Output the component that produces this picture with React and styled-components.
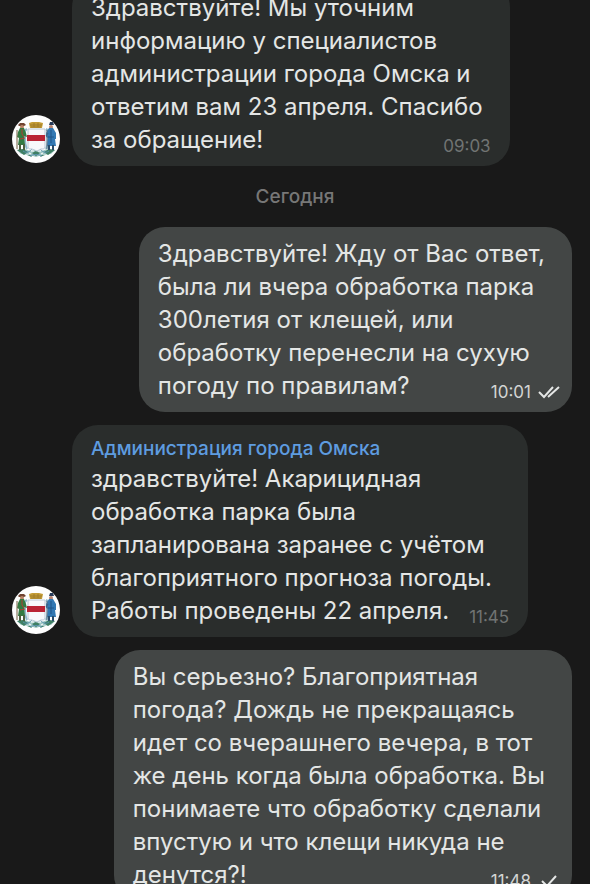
import React, { useLayoutEffect, useRef } from 'react';
import styled, { createGlobalStyle } from 'styled-components';

const messages = [
  {
    id: 1,
    time: '09:03',
    text: `Здравствуйте! Мы уточним
информацию у специалистов
администрации города Омска и
ответим вам 23 апреля. Спасибо
за обращение!`,
  },
  { id: 2, day: 'Сегодня' },
  {
    id: 3,
    own: true,
    read: true,
    time: '10:01',
    text: `Здравствуйте! Жду от Вас ответ,
была ли вчера обработка парка
300летия от клещей, или
обработку перенесли на сухую
погоду по правилам?`,
  },
  {
    id: 4,
    author: 'Администрация города Омска',
    time: '11:45',
    text: `здравствуйте! Акарицидная
обработка парка была
запланирована заранее с учётом
благоприятного прогноза погоды.
Работы проведены 22 апреля.`,
  },
  {
    id: 5,
    own: true,
    time: '11:48',
    text: `Вы серьезно? Благоприятная
погода? Дождь не прекращаясь
идет со вчерашнего вечера, в тот
же день когда была обработка. Вы
понимаете что обработку сделали
впустую и что клещи никуда не
денутся?!`,
  },
];

const Emblem = () => (
  <svg viewBox="0 0 48 48" role="img" aria-label="Администрация города Омска">
    <circle cx="24" cy="24" r="24" fill="#fdfdfd" />
    {/* ribbon and base */}
    <path
      d="M15 14c-4 2-2 5-2 8s0 8 2 12M34 14c4 2 2 5 2 8s0 8-2 12"
      fill="none"
      stroke="#8fb9cb"
      strokeWidth="2"
    />
    <path d="M5 35c5-2 9-1 13 1l6-2 6 2c4-2 8-3 13-1l-4 4-9 1-6 2-6-2-9-1z" fill="#9fc6c4" />
    <path
      d="M5 35l6-1 5 3-4 3zM43 35l-6-1-5 3 4 3zM20 38l4-2 4 2-4 3zM15 40l4 0 1 2zM33 40l-4 0-1 2z"
      fill="#3f7f63"
    />
    <path
      d="M11 36c4 3 7 0 9-2M37 36c-4 3-7 0-9-2M18 41c4-2 8-2 12 0"
      fill="none"
      stroke="#5791ad"
      strokeWidth="1"
    />
    <path d="M19 36l3 0M26 36l3 0M17 38l2 1M31 38l-2 1" stroke="#fff" strokeWidth="1" />
    {/* shield */}
    <path d="M16 14h17v18c0 2-2 2-4 2l-4 2-5-2c-2 0-4 0-4-2z" fill="#f8f8fb" stroke="#b9c8d6" />
    <path d="M15 20h18v6H15z" fill="#ba2334" />
    {/* crown */}
    <path d="M17 8l3-1 4 0 3 0 4 1-1 5H18z" fill="#c39b35" />
    <path d="M18 10h12M19 12h10M22 8v4M26 8v4" stroke="#9d7a2b" strokeWidth="1" />
    {/* left guard */}
    <path d="M6 10l2-2 4 0 2 2-2 1-5 0z" fill="#704331" />
    <circle cx="10" cy="12" r="2" fill="#b98568" />
    <path d="M8 13l4 0 2 5 1 4-3-1 1 9H6l1-7-2-1 1-5z" fill="#347a43" />
    <path d="M10 14v5l2 3M8 24l5-1" fill="none" stroke="#b13d35" strokeWidth="1" />
    <path d="M8 29v6M12 29v6" stroke="#4d6040" strokeWidth="2" />
    <path d="M5 15v19" stroke="#735f41" strokeWidth="1" />
    {/* right guard */}
    <path d="M37 10l1-3 3 0 1 3z" fill="#263a58" />
    <circle cx="39" cy="12" r="2" fill="#b98471" />
    <path d="M37 13l4 0 3 5 0 6-1 0 1 7h-9l1-8-2-1 0-4z" fill="#3278b3" />
    <path d="M39 15v13M36 22l6 0M36 18l-2 3" fill="none" stroke="#205487" strokeWidth="1" />
    <path d="M37 30v5M41 30v5" stroke="#294b6a" strokeWidth="2" />
    <path d="M35 15v19" stroke="#526c80" strokeWidth="1" />
  </svg>
);

const Ticks = ({ read }) => (
  <TickIcon viewBox="0 0 24 14" role="img" aria-label={read ? 'Прочитано' : 'Отправлено'}>
    {read ? <path d="M2 7l5 5 9-10M11 12l11-10" /> : <path d="M5 7l5 5 9-10" />}
  </TickIcon>
);

const Message = ({ author, text, time, own, read }) => (
  <Row $own={own}>
    {!own && (
      <Avatar>
        <Emblem />
      </Avatar>
    )}
    <Bubble $own={own}>
      {author && <Author href="#author">{author}</Author>}
      <Text>
        {text}
        <Meta $own={own}>
          <time>{time}</time>
          {own && <Ticks read={read} />}
        </Meta>
      </Text>
    </Bubble>
  </Row>
);

const App = () => {
  const thread = useRef(null);

  // open the thread just past the top edge of the first bubble
  useLayoutEffect(() => {
    thread.current.scrollTop = 19;
  }, []);

  return (
    <>
      <GlobalStyle />
      <Thread ref={thread}>
        {messages.map(({ id, day, ...message }) =>
          day ? <Day key={id}>{day}</Day> : <Message key={id} {...message} />
        )}
      </Thread>
    </>
  );
};

const GlobalStyle = createGlobalStyle`
  * {
    box-sizing: border-box;
  }

  body {
    margin: 0;
    background: #191919;
    font-family: Inter, Roboto, sans-serif;
  }
`;

const Thread = styled.main`
  display: flex;
  flex-direction: column;
  gap: 13px;
  height: 100vh;
  padding-bottom: 13px;
  overflow-y: auto;
  scrollbar-width: none;
`;

const Row = styled.article`
  display: flex;
  flex-shrink: 0;
  align-items: flex-end;
  justify-content: ${({ $own }) => ($own ? 'flex-end' : 'flex-start')};
  gap: 12px;
  padding: 0 18px 0 12px;
`;

const Avatar = styled.div`
  flex: none;
  width: 48px;
  height: 48px;
  margin-bottom: 3px;

  svg {
    display: block;
  }
`;

const Bubble = styled.div`
  padding: 10px 27px 10px 19px;
  border-radius: 26px;
  background: ${({ $own }) => ($own ? '#434645' : '#2a2d2c')};
`;

const Author = styled.a`
  display: block;
  color: #5e9ce0;
  font-size: 19px;
  font-weight: 500;
  line-height: 27px;
  text-decoration: none;
`;

const Text = styled.p`
  margin: 0;
  color: #e4e6e5;
  font-size: 24px;
  line-height: 33px;
  white-space: pre-line;
`;

/* shares the last line of the text, hanging into the bubble's padding */
const Meta = styled.span`
  float: right;
  display: flex;
  align-items: center;
  gap: 6px;
  margin-right: ${({ $own }) => ($own ? '-16px' : '-8px')};
  padding: 13px 0 0 20px;
  color: ${({ $own }) => ($own ? '#d3d5d4' : '#717473')};
  font-size: 17px;
  line-height: 20px;
`;

const TickIcon = styled.svg`
  width: 24px;
  height: 14px;
  fill: none;
  stroke: #e4e6e5;
  stroke-width: 2;
`;

const Day = styled.div`
  flex-shrink: 0;
  padding: 4px 0;
  color: #777777;
  font-size: 19px;
  font-weight: 500;
  line-height: 27px;
  text-align: center;
`;

export default App;
